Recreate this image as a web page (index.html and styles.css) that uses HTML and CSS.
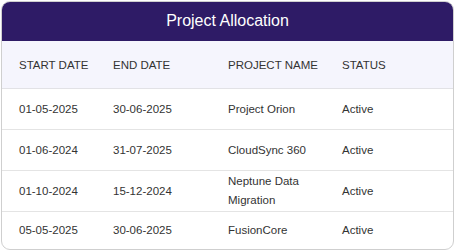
FILE: index.html
```html
<!DOCTYPE html>
<html>
<head>
<meta charset="utf-8">
<link rel="stylesheet" href="styles.css">
</head>
<body>
<div class="card">
  <div class="title">Project Allocation</div>
  <table class="grid">
    <colgroup>
      <col class="c1"><col class="c2"><col class="c3"><col class="c4">
    </colgroup>
    <thead>
      <tr><th>START DATE</th><th>END DATE</th><th>PROJECT NAME</th><th>STATUS</th></tr>
    </thead>
    <tbody>
      <tr><td>01-05-2025</td><td>30-06-2025</td><td>Project Orion</td><td>Active</td></tr>
      <tr><td>01-06-2024</td><td>31-07-2025</td><td>CloudSync 360</td><td>Active</td></tr>
      <tr><td>01-10-2024</td><td>15-12-2024</td><td>Neptune Data Migration</td><td>Active</td></tr>
      <tr class="last"><td>05-05-2025</td><td>30-06-2025</td><td>FusionCore</td><td>Active</td></tr>
    </tbody>
  </table>
</div>
</body>
</html>
```
FILE: styles.css
```css
html, body {
  margin: 0;
  padding: 0;
  background: #ffffff;
}
body {
  padding: 1px 0 0 1px;
  font-family: "Liberation Sans", Arial, sans-serif;
}
.card {
  box-sizing: border-box;
  width: 453px;
  height: 249px;
  border: 1px solid #cfcfcf;
  border-radius: 9px;
  overflow: hidden;
  background: #ffffff;
}
.title {
  height: 39px;
  background: #2e1b66;
  color: #ffffff;
  font-size: 16px;
  line-height: 37px;
  text-align: center;
}
.grid {
  width: 451px;
  border-collapse: collapse;
  table-layout: fixed;
}
.c1 { width: 94px; }
.c2 { width: 115px; }
.c3 { width: 114px; }
.c4 { width: 128px; }
th, td {
  padding: 0 8px 0 17px;
  text-align: left;
  vertical-align: middle;
  font-size: 11.5px;
  color: #333333;
  font-weight: normal;
}
th {
  height: 47px;
  padding-right: 0;
  white-space: nowrap;
  background: #f5f5fd;
  border-bottom: 1px solid #e2e2e6;
}
td {
  height: 40px;
  line-height: 19px;
  border-bottom: 1px solid #e4e4e4;
}
tr.last td {
  border-bottom: none;
  height: 37px;
}
```
